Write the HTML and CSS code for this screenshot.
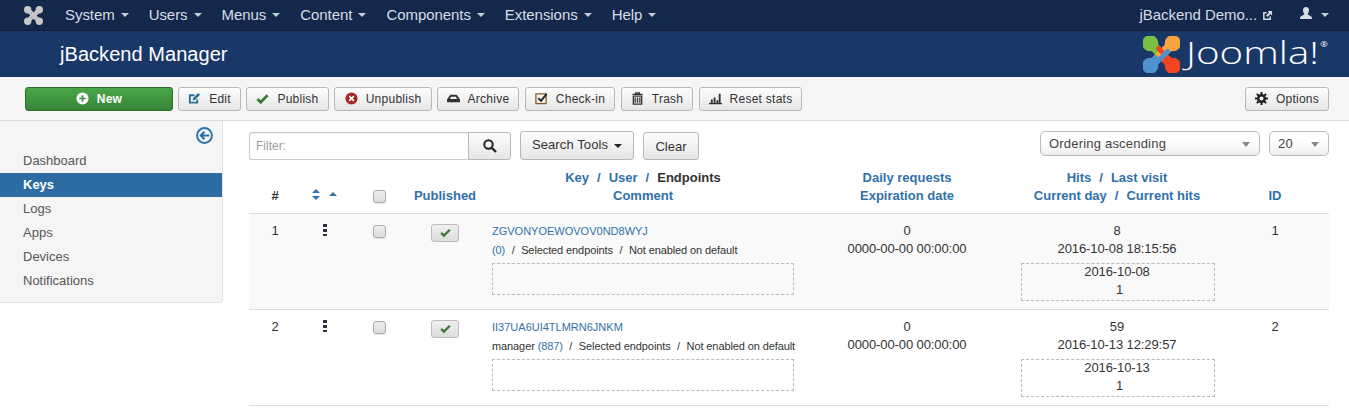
FILE: index.html
```html
<!DOCTYPE html>
<html lang="en">
<head>
<meta charset="utf-8">
<title>jBackend Manager</title>
<link rel="stylesheet" href="styles.css">
</head>
<body>
<nav class="navbar">
  <svg class="nav-logo" viewBox="0 0 36 36"><g class="logo-mono"><g id="arm"><circle cx="7" cy="7" r="5"/><path d="M7 10 21 24M10 7l5 5"/></g><g transform="rotate(90 18 18)"><circle cx="7" cy="7" r="5"/><path d="M7 10 21 24M10 7l5 5"/></g><g transform="rotate(180 18 18)"><circle cx="7" cy="7" r="5"/><path d="M7 10 21 24M10 7l5 5"/></g><g transform="rotate(270 18 18)"><circle cx="7" cy="7" r="5"/><path d="M7 10 21 24M10 7l5 5"/></g></g></svg>
  <ul class="menu">
    <li>System<i class="caret"></i></li>
    <li>Users<i class="caret"></i></li>
    <li>Menus<i class="caret"></i></li>
    <li>Content<i class="caret"></i></li>
    <li>Components<i class="caret"></i></li>
    <li>Extensions<i class="caret"></i></li>
    <li>Help<i class="caret"></i></li>
  </ul>
  <div class="nav-right">
    <span class="site">jBackend Demo...</span>
    <svg class="ext" viewBox="0 0 12 12"><path d="M9 7v3H2V3h3" fill="none" stroke="currentColor" stroke-width="1.6"/><path d="M6 1h5v5L9.300 4.300 6 7.600 4.400 6 7.700 2.700z" fill="currentColor"/></svg>
    <svg class="user" viewBox="0 0 12 13"><path d="M6 0c2 0 3 1.400 3 3.200S8 6.600 7.600 7.200c0 .8 4.400 1.600 4.400 3.800v1H0v-1c0-2.200 4.400-3 4.400-3.800C4 6.600 3 5 3 3.200S4 0 6 0z" fill="currentColor"/></svg>
    <i class="caret"></i>
  </div>
</nav>
<header class="titlebar">
  <h1>jBackend Manager</h1>
  <div class="brand">
    <svg class="brand-mark" viewBox="0 0 36 36">
      <g class="c-green"><circle cx="7" cy="7" r="5.500"/><path d="M7 10 21 24M10 7l5 5"/></g>
      <g class="c-orange" transform="rotate(90 18 18)"><circle cx="7" cy="7" r="5.500"/><path d="M7 10 21 24M10 7l5 5"/></g>
      <g class="c-red" transform="rotate(180 18 18)"><circle cx="7" cy="7" r="5.500"/><path d="M7 10 21 24M10 7l5 5"/></g>
      <g class="c-blue" transform="rotate(270 18 18)"><circle cx="7" cy="7" r="5.500"/><path d="M7 10 21 24M10 7l5 5"/></g>
    </svg>
    <span class="wordmark">Joomla!<span class="reg">®</span></span>
  </div>
</header>
<div class="toolbar">
  <button class="btn btn-new"><svg class="ic" viewBox="0 0 14 14"><circle cx="7" cy="7" r="6.500" fill="#fff"/><path d="M7 3.500v7M3.500 7h7" stroke="#3d8b3d" stroke-width="1.800"/></svg>New</button>
  <button class="btn w-edit"><svg class="ic" viewBox="0 0 14 14"><path d="M10 8v3.500H2v-8h5" fill="none" stroke="#2f6f93" stroke-width="2"/><path d="M5.500 6.500 11 1l2 2-5.500 5.500-2.500.500z" fill="#2f6f93"/></svg>Edit</button>
  <button class="btn w-pub"><svg class="ic" viewBox="0 0 14 14"><path d="M1.500 7.500 5 11l7.500-7.500" fill="none" stroke="#3c7a36" stroke-width="3"/></svg>Publish</button>
  <button class="btn w-unpub"><svg class="ic" viewBox="0 0 14 14"><circle cx="7" cy="7" r="6.500" fill="#a3282a"/><path d="m4.500 4.500 5 5m0-5-5 5" stroke="#fff" stroke-width="1.800"/></svg>Unpublish</button>
  <button class="btn w-arch"><svg class="ic" viewBox="0 0 14 14"><path d="M3.500 3h7L14 8v3H0V8zM3 7.500h8L9.500 5h-5z" fill="#333" fill-rule="evenodd"/></svg>Archive</button>
  <button class="btn w-check"><svg class="ic" viewBox="0 0 14 14"><path d="M1 2h11v10.500H1z" fill="none" stroke="#8a5a1e" stroke-width="1.400"/><path d="m3.500 6.500 3 3L12.500 2" fill="none" stroke="#222" stroke-width="2"/></svg>Check-in</button>
  <button class="btn w-trash"><svg class="ic" viewBox="0 0 14 14"><path d="M1.500 2.500h11M5 2.500V1h4v1.500" fill="none" stroke="#333" stroke-width="1.400"/><path d="M2.500 4.500h9V13h-9zM4.500 6v5.500M7 6v5.500M9.500 6v5.500" fill="none" stroke="#333" stroke-width="1.400"/></svg>Trash</button>
  <button class="btn w-reset"><svg class="ic" viewBox="0 0 14 14"><path d="M0 12.500h14" stroke="#333" stroke-width="1.400"/><path d="M2 8h2v4H2zM5 6h2v6H5zM8 9h2v3H8zM10.500 2h2v10h-2z" fill="#333"/></svg>Reset stats</button>
  <button class="btn btn-options"><svg class="ic" viewBox="0 0 14 14"><circle cx="7" cy="7" r="3.500" fill="none" stroke="#222" stroke-width="2.600"/><path d="M7 0v3M7 11v3M0 7h3M11 7h3M2 2l2 2M10 10l2 2M12 2l-2 2M4 10l-2 2" stroke="#222" stroke-width="2.200"/></svg>Options</button>
</div>
<div class="layout">
  <aside class="sidebar">
    <div class="collapse"><svg class="back" viewBox="0 0 16 16"><circle cx="8" cy="8" r="7" fill="none" stroke="#2f72a9" stroke-width="1.800"/><path d="M12.500 8H5M8 4.500 4.500 8 8 11.500" fill="none" stroke="#2f72a9" stroke-width="2"/></svg></div>
    <ul class="side-menu">
      <li>Dashboard</li>
      <li class="active">Keys</li>
      <li>Logs</li>
      <li>Apps</li>
      <li>Devices</li>
      <li>Notifications</li>
    </ul>
  </aside>
  <main class="content">
    <div class="filters">
      <div class="search-group">
        <input class="filter-input" type="text" placeholder="Filter:">
        <button class="btn-plain btn-search"><svg viewBox="0 0 14 14" class="ic-search"><circle cx="5.500" cy="5.500" r="4.200" fill="none" stroke="#222" stroke-width="2"/><path d="m8.800 8.800 4.200 4.200" stroke="#222" stroke-width="2.400"/></svg></button>
      </div>
      <button class="btn-plain btn-tools"><span class="tools-label">Search Tools</span><i class="caret dark"></i></button>
      <button class="btn-plain btn-clear">Clear</button>
      <div class="select sel-order">Ordering ascending<i class="caret grey"></i></div>
      <div class="select sel-limit">20<i class="caret grey"></i></div>
    </div>
    <table class="grid">
      <colgroup><col class="c1"><col class="c2"><col class="c3"><col class="c4"><col class="c5"><col class="c6"><col class="c7"><col class="c8"></colgroup>
      <thead>
        <tr>
          <th class="bottom plain">#</th>
          <th class="bottom"><span class="sort-icons"><svg viewBox="0 0 8 11" class="sort"><path d="M4 0l4 4H0zM4 11 0 7h8z"/></svg><svg viewBox="0 0 8 4" class="asc"><path d="M4 0l4 4H0z"/></svg></span></th>
          <th class="bottom"><input type="checkbox" class="check"></th>
          <th class="bottom">Published</th>
          <th>Key<span class="sep">/</span>User<span class="sep">/</span><span class="plain">Endpoints</span><br>Comment</th>
          <th>Daily requests<br>Expiration date</th>
          <th class="hits">Hits<span class="sep">/</span>Last visit<br>Current day<span class="sep">/</span>Current hits</th>
          <th class="bottom id">ID</th>
        </tr>
      </thead>
      <tbody>
        <tr class="odd">
          <td>1</td>
          <td><i class="handle"></i></td>
          <td><input type="checkbox" class="check"></td>
          <td><span class="pub"><svg viewBox="0 0 14 14"><path d="M1.500 7.500 5 11l7.500-7.500" fill="none" stroke="#3c7a36" stroke-width="3"/></svg></span></td>
          <td class="key">
            <div class="key-id">ZGVONYOEWOVOV0ND8WYJ</div>
            <div class="key-meta"><span class="lnk">(0)</span><span class="sep">/</span>Selected endpoints<span class="sep">/</span>Not enabled on default</div>
            <div class="comment"></div>
          </td>
          <td>0<br>0000-00-00 00:00:00</td>
          <td class="hits">8<br>2016-10-08 18:15:56<div class="current"><div class="current-text">2016-10-08<br><span class="tally">1</span></div></div></td>
          <td class="id">1</td>
        </tr>
        <tr>
          <td>2</td>
          <td><i class="handle"></i></td>
          <td><input type="checkbox" class="check"></td>
          <td><span class="pub"><svg viewBox="0 0 14 14"><path d="M1.500 7.500 5 11l7.500-7.500" fill="none" stroke="#3c7a36" stroke-width="3"/></svg></span></td>
          <td class="key">
            <div class="key-id">II37UA6UI4TLMRN6JNKM</div>
            <div class="key-meta">manager <span class="lnk">(887)</span><span class="sep">/</span>Selected endpoints<span class="sep">/</span>Not enabled on default</div>
            <div class="comment"></div>
          </td>
          <td>0<br>0000-00-00 00:00:00</td>
          <td class="hits">59<br>2016-10-13 12:29:57<div class="current"><div class="current-text">2016-10-13<br><span class="tally">1</span></div></div></td>
          <td class="id">2</td>
        </tr>
      </tbody>
    </table>
  </main>
</div>
</body>
</html>
```
FILE: styles.css
```css
* { box-sizing: border-box; }
html, body { margin: 0; height: 408px; overflow: hidden; }
body { font: 13px/18px "Liberation Sans", Arial, sans-serif; color: #333; background: #fff; }
ul { list-style: none; margin: 0; padding: 0; }
button { font-family: inherit; }

.navbar { height: 31px; display: flex; align-items: center; background: #13284a; border-bottom: 1px solid #0e1d36; color: #d8dde4; font-size: 15px; letter-spacing: -.06px; }
.nav-logo { width: 19px; height: 19px; margin-left: 24px; }
.logo-mono { fill: #c8c8c8; stroke: #c8c8c8; stroke-width: 4; stroke-linecap: round; }
.menu { display: flex; margin-left: 12px; }
.menu li { padding: 0 10px; display: flex; align-items: center; white-space: nowrap; }
.caret { display: inline-block; width: 0; height: 0; margin-left: 6px; border-left: 4px solid transparent; border-right: 4px solid transparent; border-top: 4px solid #c6ccd4; }
.nav-right { margin-left: auto; display: flex; align-items: center; padding-right: 20px; }
.ext { width: 11px; height: 11px; margin-left: 5px; }
.user { width: 12px; height: 13px; margin-left: 27px; margin-top: -3px; }
.nav-right .caret { margin-left: 9px; }

.titlebar { height: 46px; background: #1a3867; display: flex; align-items: center; padding-left: 60px; color: #fff; }
.titlebar h1 { margin: 0; font-size: 20px; font-weight: 400; line-height: 46px; letter-spacing: .05px; }
.brand { margin-left: auto; display: flex; align-items: center; padding-right: 29px; }
.brand-mark { width: 37px; height: 37px; fill: currentColor; stroke: currentColor; stroke-width: 4.800; stroke-linecap: round; }
.c-green { color: #7ac143; } .c-orange { color: #f9a541; } .c-red { color: #f44321; } .c-blue { color: #5091cd; }
.wordmark { display: block; width: 134px; margin: 0 0 4px 6px; font: 300 31px/40px "Open Sans", sans-serif; white-space: nowrap; transform: scaleX(1.3); transform-origin: left center; }
.reg { font-size: 7px; line-height: 7px; font-weight: 400; vertical-align: 17px; margin-left: 1px; }

.toolbar { height: 44px; background: #f5f5f5; border-bottom: 1px solid #dedede; display: flex; align-items: center; gap: 5px; padding: 0 20px 0 25px; }
.btn { height: 24px; padding: 0; display: flex; align-items: center; justify-content: center; font-size: 12px; letter-spacing: .25px; color: #333; background: linear-gradient(#fdfdfd, #e6e6e6); border: 1px solid #b8b8b8; border-radius: 3px; white-space: nowrap; }
.ic { width: 13px; height: 13px; margin-right: 8px; flex: none; }
.btn-new { width: 148px; color: #fff; font-weight: 700; background: linear-gradient(#4aa649, #378537); border-color: #2d6e2d; }
.w-edit { width: 63px; }
.w-pub { width: 83px; }
.w-unpub { width: 98px; }
.w-arch { width: 82px; }
.w-check { width: 90px; margin-left: 1px; }
.w-trash { width: 72px; margin-left: 1px; }
.w-reset { width: 103px; margin-left: 1px; }
.btn-options { width: 84px; margin-left: auto; }

.layout { display: flex; align-items: flex-start; }
.sidebar { width: 223px; flex: none; height: 182px; background: #f5f5f5; border-right: 1px solid #e3e3e3; border-bottom: 1px solid #e3e3e3; border-bottom-right-radius: 4px; color: #555; }
.collapse { height: 28px; display: flex; justify-content: flex-end; align-items: flex-start; padding: 6px 9px 0 0; }
.back { width: 17px; height: 17px; }
.side-menu li { height: 24px; line-height: 24px; padding-left: 23px; }
.side-menu .active { background: #2d6ca2; color: #fff; font-weight: 700; }

.content { flex: 1; padding: 11px 20px 0 26px; min-width: 0; }
.filters { height: 28px; display: flex; align-items: flex-start; }
.search-group { display: flex; }
.filter-input { width: 219px; height: 28px; padding: 0 6px; border: 1px solid #ccc; border-right: 0; border-radius: 3px 0 0 3px; font: 12px "Liberation Sans", sans-serif; background: #fff; box-shadow: inset 0 1px 1px rgba(0,0,0,.07); }
.filter-input::placeholder { color: #999; }
.btn-plain { height: 28px; font-size: 13px; color: #333; background: linear-gradient(#fdfdfd, #e6e6e6); border: 1px solid #b8b8b8; border-radius: 3px; padding: 0; display: flex; align-items: center; justify-content: center; }
.btn-search { width: 43px; border-radius: 0 3px 3px 0; }
.ic-search { width: 14px; height: 14px; }
.btn-tools { width: 114px; margin-left: 9px; height: 29px; margin-top: -1px; letter-spacing: .1px; padding-bottom: 2px; }
.btn-clear { width: 56px; margin-left: 9px; }
.caret.dark { border-top-color: #222; margin-left: 6px; margin-top: 2px; }
.caret.grey { border-top-color: #888; position: absolute; right: 9px; top: 10px; border-top-width: 5px; }
.select { position: relative; height: 25px; margin-top: -1px; line-height: 23px; padding-left: 8px; background: linear-gradient(#fff 40%, #eee); border: 1px solid #bbb; border-radius: 5px; color: #444; font-size: 13px; letter-spacing: .2px; }
.sel-order { width: 220px; margin-left: auto; }
.sel-limit { width: 60px; margin-left: 9px; }

.grid { width: 1080px; table-layout: fixed; border-collapse: collapse; }
.c1 { width: 52px; } .c2 { width: 48px; } .c3 { width: 60px; } .c4 { width: 72px; } .c5 { width: 324px; } .c6 { width: 204px; } .c7 { width: 218px; } .c8 { width: 102px; }
.grid th, .grid td { text-align: center; vertical-align: top; font-weight: 400; }
.grid th { height: 53px; padding: 9px 0 0; color: #3071a9; font-weight: 700; border-bottom: 1px solid #ddd; }
.grid th.bottom { vertical-align: bottom; padding-bottom: 8px; }
.grid th.plain, .grid .plain { color: #333; }
.grid td { height: 96px; border-bottom: 1px solid #ddd; padding: 8px 0 0; letter-spacing: -.1px; }
.grid .hits { padding-right: 2px; }
.grid .id { padding-right: 6px; }
.odd td { background: #f9f9f9; }
.sep { margin: 0 8px; font-weight: inherit; }
.sort-icons { display: inline-flex; align-items: flex-start; gap: 9px; margin-right: 2px; }
.sort { width: 8px; height: 11px; fill: #3071a9; }
.asc { width: 8px; height: 4px; fill: #3071a9; margin-top: 3px; }
.check { appearance: none; width: 13px; height: 13px; margin: 3px 0 0; background: linear-gradient(#eee, #ddd); border: 1px solid #aaa; border-radius: 3px; vertical-align: top; box-shadow: 0 1px 1px rgba(0,0,0,.1); }
.grid th .check { margin: 0 0 -1px; vertical-align: middle; }
.handle { display: inline-block; width: 4px; height: 12px; margin-top: 2px; vertical-align: top; background: repeating-linear-gradient(#2a3048 0 3px, transparent 3px 5px); }
.pub { display: inline-flex; width: 28px; height: 18px; margin-top: 2px; align-items: center; justify-content: center; background: linear-gradient(#f0f0f0, #ddd); border: 1px solid #bbb; border-radius: 3px; vertical-align: top; }
.pub svg { width: 11px; height: 11px; }
.grid td.key { text-align: left; padding: 8px 11px 0; font-size: 11px; }
.key-id { color: #3071a9; line-height: 18px; letter-spacing: 0; }
.key-meta { line-height: 18px; margin-top: 1px; white-space: nowrap; }
.key-meta .sep { margin: 0 6.500px; }
.lnk { color: #3071a9; }
.comment { height: 32px; margin-top: 4px; border: 1px dashed #bbb; }
.current { margin: 5px 10px 0 12px; height: 38px; padding-right: 2px; border: 1px dashed #bbb; line-height: 18px; }
.current-text { margin-top: -1px; }
.tally { padding-left: 5px; color: #333; }
```
